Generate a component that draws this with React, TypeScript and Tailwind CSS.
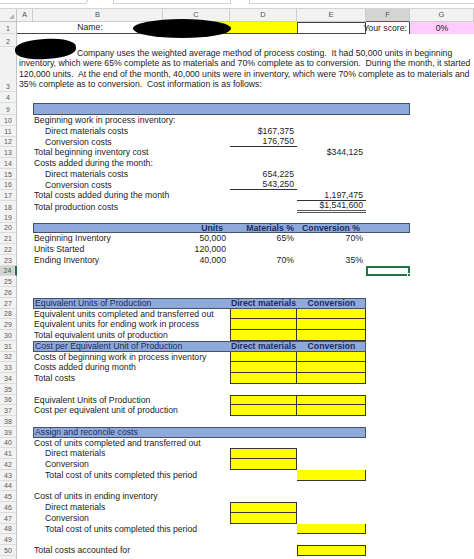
import React from 'react'

// Excel sheet: process costing (weighted average) worksheet
const GRID = 'grid grid-cols-[17px_16px_130px_67px_67px_69px_44px_64px]'
const ROW = 'h-[10.75px]'

type Cell = { at: string; t?: string; k?: string }
type RowDef = { n: number; h?: string; cells?: Cell[] }

const INK = 'text-[#1c1c1c]'
const NAVY = 'text-[#1f2b5e]'
const BAR = 'bg-[#8eaadb] border border-[#45526b]'
const Y = 'bg-[#ffff00] border-[#363636]'

const lab = (t: string): Cell => ({ at: 'col-start-3', t, k: 'pl-[1px]' })
const ind = (t: string): Cell => ({ at: 'col-start-3', t, k: 'pl-[12px]' })
const numC = (t: string, k = ''): Cell => ({ at: 'col-start-4', t, k: 'justify-end pr-[4px] ' + k })
const numD = (t: string, k = ''): Cell => ({ at: 'col-start-5', t, k: 'justify-end pr-[3px] ' + k })
const numE = (t: string, k = ''): Cell => ({ at: 'col-start-6', t, k: 'justify-end pr-[3px] ' + k })

// yellow answer boxes
const yD = (k: string): Cell => ({ at: 'col-start-5', k: Y + ' ' + k })
const yE = (k: string): Cell => ({ at: 'col-start-6', k: Y + ' ' + k })

const barBE = (title: string): Cell[] => [
  { at: 'col-start-3 col-span-4', k: BAR },
  { at: 'col-start-3', t: title, k: 'pl-[2px] ' + NAVY },
  { at: 'col-start-5', t: 'Direct materials', k: 'justify-center font-bold ' + NAVY },
  { at: 'col-start-6', t: 'Conversion', k: 'justify-center font-bold ' + NAVY },
]

const rows: RowDef[] = [
  { n: 9, h: 'h-[12px]', cells: [{ at: 'col-start-3 col-span-5', k: BAR }] },
  { n: 10, cells: [lab('Beginning work in process inventory:')] },
  { n: 11, cells: [ind('Direct materials costs'), numD('$167,375')] },
  { n: 12, cells: [ind('Conversion costs'), numD('176,750', 'border-b border-[#333]')] },
  { n: 13, cells: [lab('Total beginning inventory cost'), numE('$344,125')] },
  { n: 14, cells: [lab('Costs added during the month:')] },
  { n: 15, cells: [ind('Direct materials costs'), numD('654,225')] },
  { n: 16, cells: [ind('Conversion costs'), numD('543,250', 'border-b border-[#333]')] },
  { n: 17, cells: [lab('Total costs added during the month'), numE('1,197,475', 'border-b border-[#333]')] },
  { n: 18, cells: [lab('Total production costs'), numE('$1,541,600', 'border-b-[3px] border-double border-[#555]')] },
  { n: 19 },
  {
    n: 20,
    cells: [
      { at: 'col-start-3 col-span-5', k: BAR },
      numC('Units', 'font-bold pr-[7px] ' + NAVY),
      numD('Materials %', 'font-bold pr-[1px] ' + NAVY),
      numE('Conversion %', 'font-bold pr-[6px] ' + NAVY),
    ],
  },
  { n: 21, cells: [lab('Beginning Inventory'), numC('50,000'), numD('65%', 'pr-[1px]'), numE('70%', 'pr-[2px]')] },
  { n: 22, cells: [lab('Units Started'), numC('120,000')] },
  { n: 23, cells: [lab('Ending Inventory'), numC('40,000'), numD('70%', 'pr-[1px]'), numE('35%', 'pr-[2px]')] },
  { n: 24, cells: [{ at: 'col-start-7', k: 'relative border-2 border-[#217346]' }] },
  { n: 25 },
  { n: 26 },
  { n: 27, cells: barBE('Equivalent Units of Production') },
  { n: 28, cells: [lab('Equivalent units completed and transferred out'), yD('border-l border-r border-b'), yE('border-r border-b')] },
  { n: 29, cells: [lab('Equivalent units for ending work in process'), yD('border-l border-r border-b'), yE('border-r border-b')] },
  { n: 30, cells: [lab('Total equivalent units of production'), yD('border-l border-r border-b'), yE('border-r border-b')] },
  { n: 31, cells: barBE('Cost per Equivalent Unit of Production') },
  { n: 32, cells: [lab('Costs of beginning work in process inventory'), yD('border-l border-r border-b'), yE('border-r border-b')] },
  { n: 33, cells: [lab('Costs added during month'), yD('border-l border-r border-b'), yE('border-r border-b')] },
  { n: 34, cells: [lab('Total costs'), yD('border-l border-r border-b'), yE('border-r border-b')] },
  { n: 35 },
  { n: 36, cells: [lab('Equivalent Units of Production'), yD('border'), yE('border-t border-r border-b')] },
  { n: 37, cells: [lab('Cost per equivalent unit of production'), yD('border-l border-r border-b'), yE('border-r border-b')] },
  { n: 38 },
  {
    n: 39,
    cells: [
      { at: 'col-start-3 col-span-4', k: BAR },
      { at: 'col-start-3', t: 'Assign and reconcile costs', k: 'pl-[2px] ' + NAVY },
    ],
  },
  { n: 40, cells: [lab('Cost of units completed and transferred out')] },
  { n: 41, cells: [ind('Direct materials'), yD('border')] },
  { n: 42, cells: [ind('Conversion'), yD('border-l border-r border-b')] },
  { n: 43, cells: [ind('Total cost of units completed this period'), yE('border-r border-b')] },
  { n: 44 },
  { n: 45, cells: [lab('Cost of units in ending inventory')] },
  { n: 46, cells: [ind('Direct materials'), yD('border')] },
  { n: 47, cells: [ind('Conversion'), yD('border-l border-r border-b')] },
  { n: 48, cells: [ind('Total cost of units completed this period'), yE('border-r border-b')] },
  { n: 49 },
  { n: 50, cells: [lab('Total costs accounted for'), yE('border')] },
  { n: 51 },
]

function RowNum({ n, sel }: { n: number; sel?: boolean }) {
  return (
    <div
      className={
        'col-start-1 row-start-1 flex items-end justify-center pb-[1px] text-[7px] leading-none border-b border-[#dcdcdc] ' +
        (sel
          ? 'bg-[#d3d3d3] text-[#217346] border-r-2 border-r-[#217346]'
          : 'bg-[#f2f2f2] text-[#5a5a5a] border-r border-r-[#c4c4c4]')
      }
    >
      {n}
    </div>
  )
}

function SheetRow({ r }: { r: RowDef }) {
  return (
    <div className={GRID + ' ' + (r.h ?? ROW)}>
      <RowNum n={r.n} sel={r.n === 24} />
      {r.cells?.map((c, i) => (
        <div
          key={i}
          className={'row-start-1 min-w-0 flex items-center whitespace-nowrap overflow-visible ' + c.at + ' ' + (c.k ?? '')}
        >
          {c.t}
          {r.n === 24 && <span className="absolute -right-[3px] -bottom-[3px] h-[4px] w-[4px] bg-[#217346] border border-white" />}
        </div>
      ))}
    </div>
  )
}

const LETTERS = ['A', 'B', 'C', 'D', 'E', 'F', 'G']
const LETTER_POS = ['col-start-2', 'col-start-3', 'col-start-4', 'col-start-5', 'col-start-6', 'col-start-7', 'col-start-8']

export default function App() {
  return (
    <div className={"relative w-[474px] h-[559px] overflow-hidden bg-white font-['Liberation_Sans',Arial,sans-serif] text-[8.7px] leading-none " + INK}>
      {/* formula bar remnants */}
      <div className="flex h-[9px] border-b border-[#d4d4d4]">
        <div className="h-[4px] w-[88px] border-b border-r border-[#d0d0d0] rounded-br-sm" />
        <div className="ml-[25px] h-[4px] w-[118px] border-b border-x border-[#d0d0d0]" />
        <div className="ml-[18px] h-[4px] w-[225px] border-b border-l border-[#d0d0d0]" />
      </div>

      {/* column headers */}
      <div className={GRID + ' h-[13px] text-[7.5px] text-[#555]'}>
        <div className="col-start-1 row-start-1 relative bg-[#f2f2f2] border-r border-b border-[#c4c4c4]">
          <span className="absolute right-[2px] bottom-[2px] h-0 w-0 border-l-[5px] border-t-[5px] border-l-transparent border-t-transparent border-r-0 border-b-[5px] border-b-[#b4b4b4]" />
        </div>
        {LETTERS.map((l, i) => (
          <div
            key={l}
            className={
              'row-start-1 flex items-center justify-center border-r border-b border-[#cdcdcd] ' +
              LETTER_POS[i] +
              (l === 'F' ? ' bg-[#d4d4d4] border-b-[#217346]' : ' bg-[#f2f2f2]')
            }
          >
            {l}
          </div>
        ))}
      </div>

      {/* row 1 */}
      <div className={GRID + ' h-[12px]'}>
        <RowNum n={1} />
        <div className="col-start-2 col-span-2 row-start-1 flex items-center justify-center border-b border-[#444]">Name:</div>
        <div className="col-start-4 col-span-2 row-start-1 bg-[#ffff00] border-b border-[#444]" />
        <div className="col-start-6 row-start-1 border border-[#444]" />
        <div className="col-start-7 row-start-1 flex items-center justify-end pr-[2px] border-r border-[#444] whitespace-nowrap">Your score:</div>
        <div className="col-start-8 row-start-1 flex items-center justify-center bg-[#ffccff]">0%</div>
      </div>

      {/* row 2 */}
      <div className={GRID + ' h-[13px]'}>
        <RowNum n={2} />
      </div>

      {/* row 3: problem text */}
      <div className={GRID + ' h-[45px]'}>
        <RowNum n={3} />
        <div className="col-start-2 col-span-7 row-start-1 pl-[2px] pt-[1px] leading-[10.3px] whitespace-nowrap">
          <div className="pl-[58px]">Company uses the weighted average method of process costing.&nbsp; It had 50,000 units in beginning</div>
          <div>inventory, which were 65% complete as to materials and 70% complete as to conversion.&nbsp; During the month, it started</div>
          <div>120,000 units.&nbsp; At the end of the month, 40,000 units were in inventory, which were 70% complete as to materials and</div>
          <div>35% complete as to conversion.&nbsp; Cost information is as follows:</div>
        </div>
      </div>

      {/* row 4 */}
      <div className={GRID + ' h-[11px]'}>
        <RowNum n={4} />
      </div>

      {rows.map((r) => (
        <SheetRow key={r.n} r={r} />
      ))}

      {/* redaction scribbles */}
      <div className="absolute left-[133px] top-[19px] h-[19px] w-[98px] rounded-[50%] bg-black" />
      <div className="absolute left-[15px] top-[39px] h-[20px] w-[61px] rounded-[45%] bg-black -rotate-3" />
    </div>
  )
}
